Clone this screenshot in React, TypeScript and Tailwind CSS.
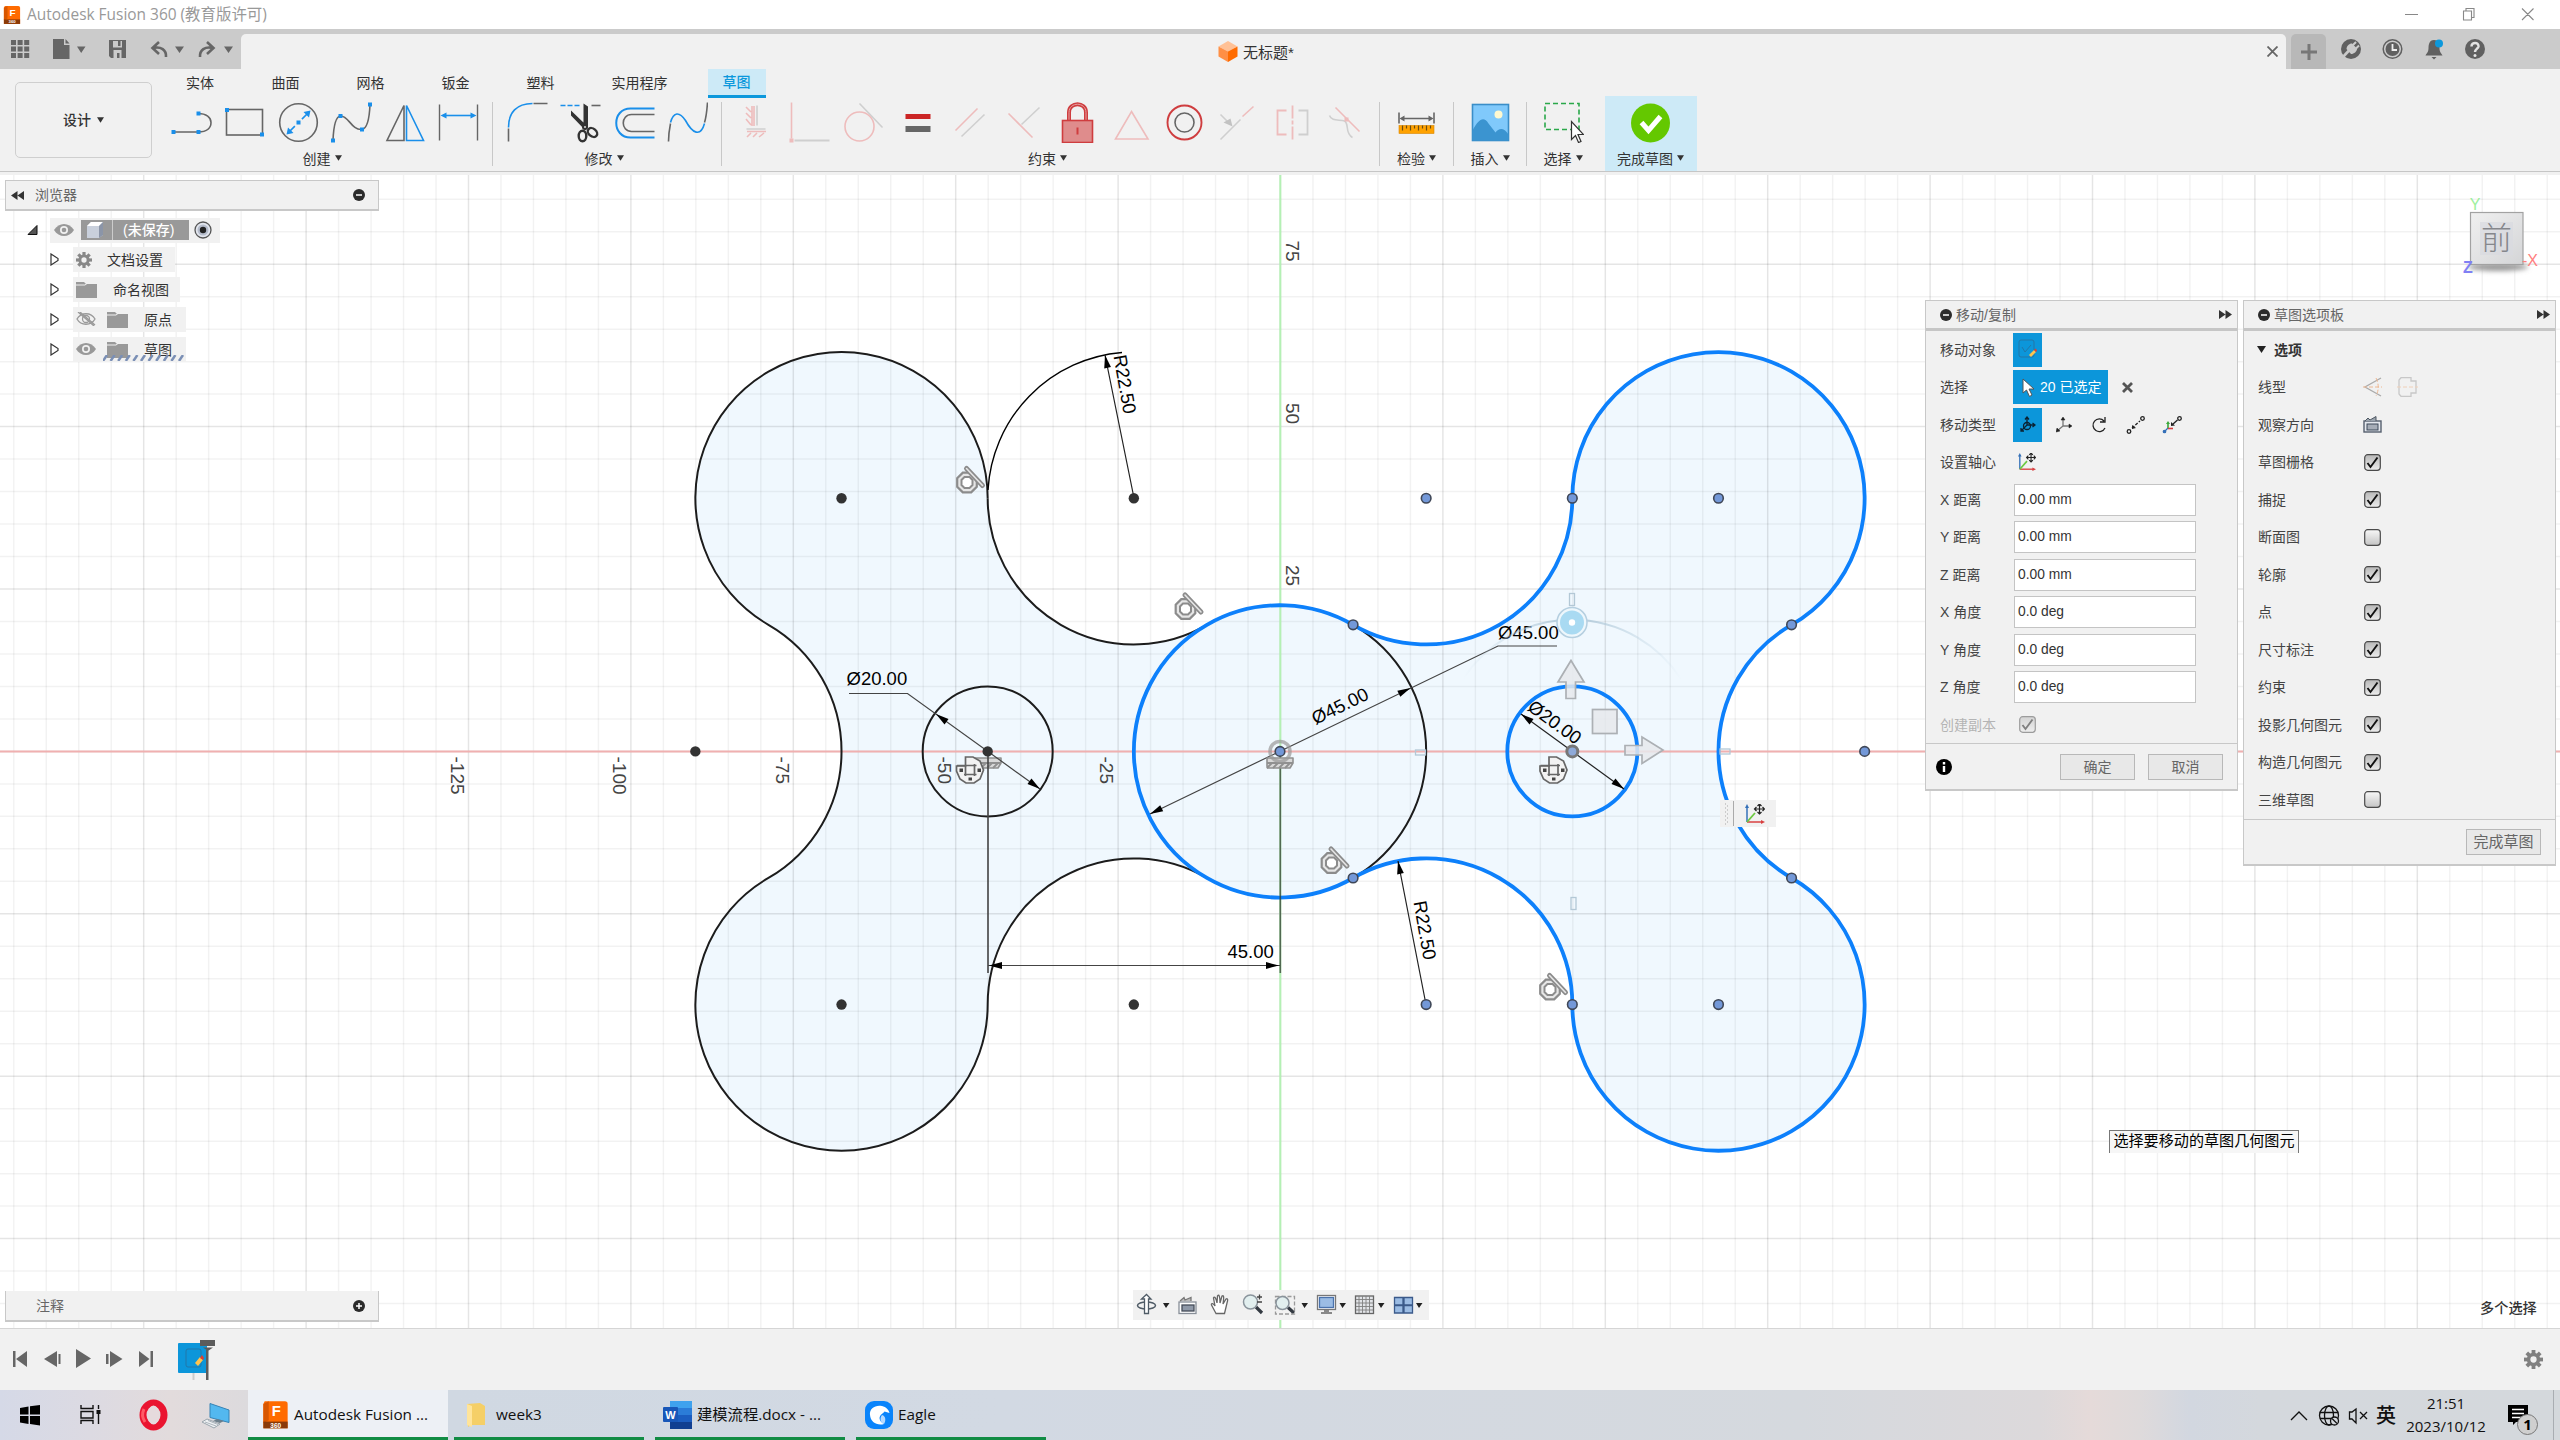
import React from "react";

const BLUE = "#1a8fea";
const GRAY = "#666";
const CX = 1280;
const CY = 751.4;
const U = 6.496;
const px = (u: number) => CX + u * U;
const py = (u: number) => CY - u * U;
const R = 22.5 * U;
const H = 38.971;
const Q = 19.486;

function Caret({ className = "" }: { className?: string }) {
  return (
    <svg className={className} width="7" height="6" viewBox="0 0 7 6">
      <path d="M0 0.3H7L3.5 5.8Z" fill="#333" />
    </svg>
  );
}

function Sq({ x, y }: { x: number; y: number }) {
  return <rect x={x - 2} y={y - 2} width="4" height="4" fill={BLUE} />;
}

function Slot({ children }: { children: React.ReactNode }) {
  return (
    <div className="flex w-[53.6px] shrink-0 justify-center">
      <svg width="41" height="41" viewBox="-0.5 -0.5 41 41" fill="none" strokeWidth="1.6">
        {children}
      </svg>
    </div>
  );
}

function Group({ label, width, labelPad = "", children }: { label: string; width: string; labelPad?: string; children: React.ReactNode }) {
  return (
    <div className={"flex shrink-0 flex-col items-center " + width}>
      <div className="flex h-[41px] justify-center">{children}</div>
      <div className={"mt-[5px] flex h-[22px] items-center gap-[4px] whitespace-nowrap text-[14px] text-[#333] " + labelPad}>
        {label}
        <Caret className="-mt-[2px]" />
      </div>
    </div>
  );
}

function Sep() {
  return <div className="h-[64px] w-[1px] shrink-0 bg-[#c8c8c8]" />;
}

function FusionLogo({ size }: { size: number }) {
  return (
    <svg width={size} height={size * 1.1} viewBox="0 0 20 22">
      <path d="M2 1H17a2 2 0 0 1 2 2V21H1V3Z" fill="#ff6b00" />
      <path d="M1 3L5 1V15L1 17Z" fill="#d85600" />
      <path d="M1 16H19V21H1Z" fill="#8a3a08" />
      <text x="10.6" y="12" fontSize="11" fontWeight="700" fill="#fff" textAnchor="middle" fontFamily="Liberation Sans, sans-serif">F</text>
      <text x="10.2" y="20.4" fontSize="4.8" fontWeight="700" fill="#fff" textAnchor="middle" fontFamily="Liberation Sans, sans-serif">360</text>
    </svg>
  );
}

function TitleBar() {
  return (
    <div className="flex h-[29px] shrink-0 items-center bg-white pl-[3px]">
      <FusionLogo size={18} />
      <span className="ml-[6px] font-['Open_Sans','Noto_Sans_CJK_SC',sans-serif] text-[15.45px] text-[#999]">Autodesk Fusion 360 (教育版许可)</span>
      <svg className="ml-auto mr-[25px] -mt-[1px]" width="134" height="14" viewBox="0 0 134 14" fill="none" stroke="#888" strokeWidth="1.1">
        <path d="M4 7.5H17M62.500 4H70.500V13H62.500ZM65 4V1.500H73V10.500H70.500M121 1.500L132.500 13M132.500 1.500L121 13" />
      </svg>
    </div>
  );
}

function TabBar() {
  return (
    <div className="flex h-[40px] shrink-0 bg-[#cbcbcb] pt-[5px]">
      <svg width="241" height="35" viewBox="0 34 241 35" fill="#666">
        {[0, 1, 2].map((r) => [0, 1, 2].map((c) => <rect key={`${r}${c}`} x={11 + c * 6.6} y={40 + r * 6.5} width="5" height="5" />))}
        <path d="M53 39H64V45H69.500V59H53ZM65.500 39L69.500 43.500H65.500Z" />
        <path d="M77 46.500H85.500L81.200 53ZM175 46.500H184L179.500 53ZM224 46.500H233L228.500 53Z" />
        <path d="M109 40H126V58H111L109 56ZM113 41V47.500H122V41ZM113.500 50V58H121.500V50Z" fillRule="evenodd" />
        <rect x="118" y="41" width="2.500" height="5" />
        <rect x="117" y="53" width="2.500" height="5" />
        <path d="M159 42L152.500 48L159 54M153 48C161 46 166.500 50 166 57" fill="none" stroke="#666" strokeWidth="2.600" />
        <path d="M207 42L213.500 48L207 54M213 48C205 46 199.500 50 200 57" fill="none" stroke="#666" strokeWidth="2.600" />
      </svg>
      <div className="flex h-[35px] w-[2045px] items-center rounded-t-[5px] bg-[#f1f1f1]">
        <div className="ml-[977px] flex items-center gap-[5px]">
          <svg width="20" height="21" viewBox="0 0 20 21">
            <path d="M10 0L19.500 5.500L10 10.500L0.500 5.500Z" fill="#ffc196" />
            <path d="M0.500 5.500L10 10.500V21L0.500 15.500Z" fill="#ff8f45" />
            <path d="M19.500 5.500L10 10.500V21L19.500 15.500Z" fill="#ff6b00" />
          </svg>
          <span className="pt-[2px] text-[15px] text-[#333]">无标题*</span>
        </div>
        <svg className="ml-auto mr-[8px]" width="11" height="11" viewBox="0 0 11 11" stroke="#666" strokeWidth="1.800">
          <path d="M0.500 0.500L10.500 10.500M10.500 0.500L0.500 10.500" />
        </svg>
      </div>
      <div className="ml-[5px] flex h-[35px] w-[35px] items-center justify-center rounded-t-[5px] bg-[#b8b8b8] pl-[1px]">
        <svg width="16" height="16" viewBox="0 0 16 16" stroke="#777" strokeWidth="3"><path d="M8 0V16M0 8H16" /></svg>
      </div>
      <svg className="ml-[12px]" width="152" height="30" viewBox="2338 34 152 30" fill="#606060">
        <circle cx="2351" cy="49" r="10" />
        <path d="M2342 58L2349 50.500" stroke="#cbcbcb" strokeWidth="2.600" />
        <path d="M2346.500 49C2346.500 46 2349 43.500 2352 43.500L2357 48.500C2357 51.500 2354 54 2351 54Z" fill="#cbcbcb" />
        <path d="M2352.500 45.500L2356 42M2355.500 49L2359 45.500" stroke="#cbcbcb" strokeWidth="2" />
        <circle cx="2392.500" cy="49" r="9.300" fill="none" stroke="#606060" strokeWidth="1.500" />
        <circle cx="2392.500" cy="49" r="7" />
        <path d="M2392.500 44V50H2397" fill="none" stroke="#eee" strokeWidth="1.800" />
        <path d="M2434 40C2429 40 2428.500 45 2428.500 48C2428.500 52 2427 53 2425.500 55.500H2442.500C2441 53 2439.500 52 2439.500 48C2439.500 45 2439 40 2434 40ZM2431.500 57H2436.500L2434 59.500Z" />
        <circle cx="2439" cy="43.500" r="4" fill="#0c98dc" />
        <circle cx="2475" cy="49" r="10" />
        <path d="M2471.500 46.500C2471.500 41.500 2479 42 2478.500 46.500C2478 49 2475 49 2475 52" fill="none" stroke="#e4e4e4" strokeWidth="2.500" />
        <circle cx="2475" cy="55.500" r="1.500" fill="#e4e4e4" />
      </svg>
    </div>
  );
}

const redL = "#eebcbc";
const grayL = "#cfcfcf";

function Toolbar() {
  return (
    <div className="flex h-[106px] shrink-0 border-b-[3px] border-[#f1f1f1] bg-[#f1f1f1]">
      <div className="flex h-[103px] w-full border-b border-[#c6c6c6]">
        <div className="ml-[15px] mt-[13px] flex h-[76px] w-[137px] shrink-0 items-center justify-center gap-[6px] rounded-[5px] border-[1.5px] border-[#cfcfcf] text-[14px] font-medium text-[#333]">
          设计
          <Caret />
        </div>
        <div className="flex flex-col">
          <div className="ml-[13px] flex h-[29px] items-center text-[14px] leading-none text-[#333]">
            <span className="-mt-[2px] w-[70px] text-center">实体</span>
            <span className="-mt-[2px] ml-[15.500px] w-[70px] text-center">曲面</span>
            <span className="-mt-[2px] ml-[15px] w-[70px] text-center">网格</span>
            <span className="-mt-[2px] ml-[15px] w-[70px] text-center">钣金</span>
            <span className="-mt-[2px] ml-[15px] w-[70px] text-center">塑料</span>
            <span className="-mt-[2px] ml-[15px] w-[98px] text-center">实用程序</span>
            <span className="ml-[19px] flex h-[29px] w-[58px] items-center justify-center border-b-[3px] border-[#0c98dc] bg-[#cdeaf7] font-medium text-[#0c98dc]">草图</span>
          </div>
          <div className="mt-[4px] flex">
            <Group label="创建" width="ml-[12px] w-[322px]" labelPad="pr-[6px]">
              <Slot>
                <path d="M1.500 29.500H26.500C36 29.500 39.500 25 39.500 20C39.500 15 35 11 26.500 11" stroke={GRAY} />
                <Sq x={2} y={29.5} /><Sq x={27} y={29.5} /><Sq x={27} y={11} />
              </Slot>
              <Slot>
                <rect x="2" y="7" width="36" height="25.500" stroke={GRAY} />
                <Sq x={2.5} y={7.5} /><Sq x={37.5} y={32} />
              </Slot>
              <Slot>
                <circle cx="20" cy="20" r="18.800" stroke={GRAY} />
                <path d="M10 30L30 10" stroke={BLUE} strokeDasharray="9 3.500 3 3.500 9" />
                <path d="M32 8L30.500 15L25 9.500ZM8 32L9.500 25L15 30.500Z" fill={BLUE} />
                <Sq x={20} y={20} />
              </Slot>
              <Slot>
                <path d="M1.500 38C2 25 4 14 9 13.500C17 13 20 28 30.500 27C36 26 38 14 38.500 2" stroke={GRAY} />
                <Sq x={1.5} y={38} /><Sq x={9} y={13.5} /><Sq x={30.5} y={27} /><Sq x={38.5} y={2} />
              </Slot>
              <Slot>
                <path d="M18.500 3V38H1.500Z" stroke={GRAY} />
                <path d="M21 3V38H38Z" stroke={BLUE} />
              </Slot>
              <Slot>
                <path d="M1 2V38M39 2V38" stroke={GRAY} strokeWidth="1.400" />
                <path d="M5 13H35" stroke={BLUE} />
                <path d="M2 13L8 10V16ZM38 13L32 10V16Z" fill={BLUE} />
              </Slot>
            </Group>
            <div className="w-[5.500px]" />
            <Sep />
            <Group label="修改" width="ml-[7px] w-[216px]" labelPad="pr-[7px]">
              <Slot>
                <path d="M1 39V26M26 1H40" stroke={GRAY} />
                <path d="M1 25C1 10 9 1 25 1" stroke={BLUE} />
              </Slot>
              <Slot>
                <path d="M0 3H20" stroke={BLUE} strokeDasharray="5 2" />
                <path d="M31 3H40" stroke={GRAY} />
                <path d="M23 1L27.500 4V26L23 22ZM10.500 8L25 22V28L10.500 13Z" fill="#333" />
                <circle cx="24.500" cy="24.500" r="3" fill="#333" />
                <circle cx="24.500" cy="24.500" r="1" fill="#ddd" />
                <ellipse cx="22" cy="33.500" rx="3.800" ry="5.200" stroke="#333" strokeWidth="2.400" />
                <ellipse cx="32" cy="30" rx="5.200" ry="3.800" stroke="#333" strokeWidth="2.400" transform="rotate(40 32 30)" />
              </Slot>
              <Slot>
                <path d="M40 6H16C-3 6-3 35 16 35H40" stroke={BLUE} strokeWidth="2" />
                <path d="M40 12H17C6 12 6 29 17 29H40" stroke={GRAY} />
              </Slot>
              <Slot>
                <path d="M1 39C1 32 2 26 3 21M37 20C39 14 39.500 7 40 0" stroke={GRAY} />
                <path d="M3 20C6 9 12 9 18 18C25 31 33 35 37 21" stroke={BLUE} />
              </Slot>
            </Group>
            <div className="w-[5px]" />
            <Sep />
            <Group label="约束" width="ml-[8px] w-[643px]" labelPad="pr-[7px]">
              <Slot>
                <path d="M17 3V23M15 3V23M9 4L14 9M9 10L14 15M9 16L14 22M10 28.500H29M10 34L14 30M16 34L20 30M22 34L27 30" stroke={redL} transform="translate(0.500 0.500)" />
                <path d="M20.500 3V23M10 26.500H29" stroke={grayL} />
              </Slot>
              <Slot>
                <path d="M2 0V36" stroke={redL} />
                <path d="M5 38H40" stroke={grayL} strokeWidth="2" />
                <rect x="0" y="36" width="4" height="4" fill={redL} />
              </Slot>
              <Slot>
                <path d="M16 1L39 25" stroke={grayL} />
                <circle cx="16" cy="24" r="14.500" stroke={redL} />
              </Slot>
              <Slot>
                <rect x="8" y="11.500" width="25" height="5" fill="#cb2525" />
                <rect x="8" y="23.500" width="25" height="6" fill="#666" />
              </Slot>
              <Slot>
                <path d="M5 28L27 6" stroke={redL} />
                <path d="M11 34L34 12" stroke={grayL} />
              </Slot>
              <Slot>
                <path d="M4 11L28 35" stroke={redL} />
                <path d="M17 22L35 5" stroke={grayL} />
              </Slot>
              <Slot>
                <path d="M11.500 18V10C11.500 -1 28.500 -1 28.500 10V18" stroke="#cf3d3f" strokeWidth="4" />
                <path d="M11.500 18V10C11.500 -1 28.500 -1 28.500 10V18" stroke="#e5a2a2" strokeWidth="1" />
                <rect x="5" y="18" width="30" height="22" fill="#df8c8c" stroke="#cf3d3f" />
                <path d="M20 25V32" stroke="#cf3d3f" strokeWidth="2" />
              </Slot>
              <Slot>
                <path d="M20 9L36.500 36.500H4Z" stroke={redL} />
              </Slot>
              <Slot>
                <circle cx="20" cy="20" r="17" stroke="#cf3d3f" strokeWidth="1.900" />
                <circle cx="20" cy="20" r="9.500" stroke="#666" />
              </Slot>
              <Slot>
                <path d="M2 37L22 17M2 12L12 22" stroke={grayL} />
                <path d="M24 14L35 4" stroke={redL} />
                <path d="M14 24L5 20L12 16Z" fill="#c2c2c2" />
              </Slot>
              <Slot>
                <path d="M14 8H5V32H14M20 3V16M20 18V22M20 24V37" stroke={redL} strokeWidth="1.800" />
                <path d="M26 8H35V32H26" stroke={grayL} strokeWidth="1.800" />
              </Slot>
              <Slot>
                <path d="M4 13C6 19 13 17 19 18.500C24 21 19 31 27 35" stroke={grayL} />
                <path d="M10 5L34 29" stroke={redL} />
                <rect x="19" y="15" width="4" height="4" fill={redL} />
              </Slot>
            </Group>
            <div className="w-[6.500px]" />
            <Sep />
            <Group label="检验" width="w-[73px]">
              <Slot>
                <path d="M2.500 10V21M37.500 10V21M6 16H34" stroke={GRAY} />
                <path d="M3 16L8 13V19ZM37 16L32 13V19Z" fill={GRAY} />
                <rect x="2.500" y="23" width="35" height="8" fill="#ffa200" stroke="#d88600" strokeWidth="0.600" />
                <path d="M6 23V28M10 23V26M14 23V28M18 23V26M22 23V28M26 23V26M30 23V28M34 23V26" stroke="#6b4c10" strokeWidth="1.200" />
              </Slot>
            </Group>
            <Sep />
            <Group label="插入" width="w-[72px]">
              <Slot>
                <rect x="2" y="2" width="36" height="36" fill="#80c9fb" stroke="#3a8ec8" />
                <path d="M2 28C8 17 13 13 18 21L25 30C28 26 33 24 38 32V38H2Z" fill="#3b94d0" />
                <circle cx="28" cy="12" r="4" fill="#fff9d0" />
              </Slot>
            </Group>
            <Sep />
            <Group label="选择" width="w-[72px]">
              <Slot>
                <rect x="1.500" y="1" width="34" height="26" stroke="#2aa84a" strokeDasharray="5 3" />
                <path d="M28 19V37L32 33L35 40L37.500 39L34.500 32H40Z" fill="#fff" stroke="#333" strokeWidth="1.200" />
              </Slot>
            </Group>
            <div className="-mt-[6px] ml-[6px] h-[75px] w-[92px] bg-[#cdeaf7] pt-[6px]">
              <Group label="完成草图" width="w-[91px]">
                <Slot>
                  <circle cx="20" cy="20.500" r="19.500" fill="#64c800" />
                  <path d="M11 20L18 28L30 14" stroke="#fff" strokeWidth="5" />
                </Slot>
              </Group>
            </div>
          </div>
        </div>
      </div>
    </div>
  );
}

function Tangent({ x, y }: { x: number; y: number }) {
  return (
    <g transform={`translate(${x} ${y})`} fill="none" strokeLinecap="round">
      <path d="M-4.200 -9.800H4.200L9.800 -4.200V4.200L4.200 9.800H-4.200L-9.800 4.200V-4.200Z" stroke="#8c8c8c" strokeWidth="2.200" fill="#e6e6e6" />
      <path d="M-2.500 -5.500H2.500L5.500 -2.500V2.500L2.500 5.500H-2.500L-5.500 2.500V-2.500Z" stroke="#8c8c8c" strokeWidth="2" fill="#fff" />
      <path d="M-0.500 -14L15.500 3" stroke="#8c8c8c" strokeWidth="5" />
      <path d="M-0.500 -14L15.500 3" stroke="#e6e6e6" strokeWidth="1.600" />
    </g>
  );
}

function FixMark({ x }: { x: number }) {
  return (
    <g transform={`translate(${x} 763)`} stroke="#909090" fill="#d8d8d8" strokeWidth="1.600">
      <path d="M-13 -5H13V0L10 5H-12.500L-13 3Z" strokeLinejoin="round" />
      <path d="M-13 0H13M-13 5L-8 0M-7 5L-2 0M-1 5L4 0M5 5L10 0" fill="none" strokeWidth="1.800" />
    </g>
  );
}

function CoincidentMark({ x }: { x: number }) {
  return (
    <g transform={`translate(${x} 770)`} stroke="#666" fill="#f2f2f2" strokeWidth="1.700">
      <path d="M-4.500 -13H3L10 -9L13.500 0L10 9L4 13H-4L-10 9L-13.500 1V-4H-4.500Z" />
      <path d="M-13 -4.500H6.500M-6 4.500H6.500M-4.500 -5V6M4.500 -6V6" fill="none" />
      <g fill="#444" stroke="none">
        <rect x="-10.500" y="-1.500" width="3.500" height="3.500" />
        <rect x="7.500" y="-1.500" width="3.500" height="3.500" />
        <rect x="-1.500" y="7.500" width="3.500" height="3" />
      </g>
    </g>
  );
}

function Tip({ x, y, a }: { x: number; y: number; a: number }) {
  return <path d="M0 0L-13 -3.400V3.400Z" fill="#000" transform={`translate(${x} ${y}) rotate(${a})`} />;
}

const BODY = [
  `M${px(-45)} ${py(H)}`,
  `A${R} ${R} 0 1 0 ${px(-78.75)} ${py(Q)}`,
  `A${R} ${R} 0 0 1 ${px(-78.75)} ${py(-Q)}`,
  `A${R} ${R} 0 1 0 ${px(-45)} ${py(-H)}`,
  `A${R} ${R} 0 0 1 ${px(-11.25)} ${py(-Q)}`,
].join("");
const LEFT_TOP = `M${px(-45)} ${py(H)}A${R} ${R} 0 0 0 ${px(-11.25)} ${py(Q)}`;
const RIGHT_FILL = [
  `M${px(45)} ${py(H)}`,
  `A${R} ${R} 0 1 1 ${px(78.75)} ${py(Q)}`,
  `A${R} ${R} 0 0 0 ${px(78.75)} ${py(-Q)}`,
  `A${R} ${R} 0 1 1 ${px(45)} ${py(-H)}`,
  `A${R} ${R} 0 0 0 ${px(11.25)} ${py(-Q)}`,
].join("");
const FILL = `${BODY}A${R} ${R} 0 0 0 ${px(11.25)} ${py(-Q)}A${R} ${R} 0 0 1 ${px(45)} ${py(-H)}A${R} ${R} 0 1 0 ${px(78.75)} ${py(-Q)}A${R} ${R} 0 0 1 ${px(78.75)} ${py(Q)}A${R} ${R} 0 1 0 ${px(45)} ${py(H)}A${R} ${R} 0 0 1 ${px(11.25)} ${py(Q)}A${R} ${R} 0 0 0 ${px(-11.25)} ${py(Q)}A${R} ${R} 0 0 1 ${px(-45)} ${py(H)}Z`;

const darkPoints = [[-67.5, H], [-22.5, H], [-90, 0], [-45, 0], [-67.5, -H], [-22.5, -H]];
const bluePoints = [[22.5, H], [45, H], [67.5, H], [11.25, Q], [78.75, Q], [11.25, -Q], [78.75, -Q], [90, 0], [22.5, -H], [45, -H], [67.5, -H]];
const range = (a: number, b: number) => Array.from({ length: b - a + 1 }, (_, i) => a + i);

function Sketch() {
  const gridColor = (k: number) => (k % 5 === 0 ? "rgba(0,0,0,0.1)" : "rgba(0,0,0,0.05)");
  return (
    <svg className="block" width="2560" height="1153" viewBox="0 175 2560 1153" fontFamily="Liberation Sans, Arial, sans-serif" fontSize="18.500">
      <rect x="0" y="175" width="2560" height="1153" fill="#fff" />
      <path d={FILL} fill="#f0f8fe" />
      {range(-39, 39).map((k) => (
        <line key={`v${k}`} x1={CX + 0.5 + k * 32.48} x2={CX + 0.5 + k * 32.48} y1="175" y2="1328" stroke={gridColor(k)} strokeWidth="1.500" />
      ))}
      {range(-17, 17).map((k) => (
        <line key={`h${k}`} y1={CY + k * 32.48} y2={CY + k * 32.48} x1="0" x2="2560" stroke={gridColor(k)} strokeWidth="1.500" />
      ))}
      <line x1="0" x2="2560" y1={CY} y2={CY} stroke="#f0b0b0" strokeWidth="2" />
      <line x1={CX + 0.3} x2={CX + 0.3} y1="175" y2="1328" stroke="#b4f0b4" strokeWidth="2" />
      <g fill="#444" fontSize="19">
        {([["25", 565], ["50", 403], ["75", 240.5]] as [string, number][]).map(([t, y]) => (
          <text key={t} transform={`translate(1286 ${y}) rotate(90)`}>{t}</text>
        ))}
        {([["-25", 1100], ["-50", 938], ["-75", 775.5], ["-100", 613], ["-125", 450.5]] as [string, number][]).map(([t, x]) => (
          <text key={t} transform={`translate(${x} 756.500) rotate(90)`}>{t}</text>
        ))}
      </g>
      <FixMark x={988} />
      <CoincidentMark x={970} />
      <Tangent x={967} y={482.5} />
      <Tangent x={1185.5} y={609} />
      <Tangent x={1331.5} y={863} />
      <Tangent x={1550} y={989.5} />
      <g fill="none" stroke="#1c1c1c" strokeWidth="2">
        <path d={BODY} />
        <path d={LEFT_TOP} />
        <circle cx={px(-45)} cy={CY} r="65" />
        <path d={`M${px(11.25)} ${py(Q)}A${R} ${R} 0 0 1 ${px(11.25)} ${py(-Q)}`} />
      </g>
      <g fill="none" stroke="#0d80fb" strokeWidth="3.800">
        <path d={RIGHT_FILL} />
        <path d={`M${px(45)} ${py(H)}A${R} ${R} 0 0 1 ${px(11.25)} ${py(Q)}`} />
        <path d={`M${px(11.25)} ${py(Q)}A${R} ${R} 0 1 0 ${px(11.25)} ${py(-Q)}`} />
        <circle cx={px(45)} cy={CY} r="65" />
      </g>
      <g fill="none" stroke="#222" strokeWidth="1.200">
        <path d="M988 490A146.200 146.200 0 0 1 1122 352.500" stroke="#000" strokeWidth="1.400" />
        <path d="M1134 498L1105 355M1426 1004.500L1398 861" />
        <path d="M849 693.500H907.500L1040 789" stroke="#444" />
        <path d="M1150 814L1498 646H1557" stroke="#444" />
        <path d="M1521 714L1624 789" />
        <path d="M988 965.500H1280" stroke="#444" />
        <path d="M988 752V973" stroke="#444" strokeWidth="1.600" />
        <path d="M1280.300 752V973" stroke="#303c30" strokeOpacity="0.750" strokeWidth="1.600" />
      </g>
      <Tip x={1105} y={355} a={-101.5} />
      <Tip x={1398} y={861} a={-101} />
      <Tip x={936} y={714} a={216} />
      <Tip x={1040} y={789} a={36} />
      <Tip x={1150} y={814} a={154} />
      <Tip x={1410.5} y={688} a={-26} />
      <Tip x={1521} y={714} a={216} />
      <Tip x={1624} y={789} a={36} />
      <Tip x={989} y={965.5} a={180} />
      <Tip x={1279} y={965.5} a={0} />
      <g fill="#000">
        <text x="846.500" y="685">Ø20.00</text>
        <text x="1498" y="639">Ø45.00</text>
        <text x="1227.500" y="958">45.00</text>
        <text transform="translate(1315.500 725) rotate(-26)">Ø45.00</text>
        <text transform="translate(1526.500 709.500) rotate(36)">Ø20.00</text>
        <text transform="translate(1113.500 356) rotate(80)">R22.50</text>
        <text transform="translate(1413.500 902) rotate(80)">R22.50</text>
      </g>
      <FixMark x={1280} />
      <circle cx="1280" cy="751.400" r="10" fill="none" stroke="#999" strokeOpacity="0.700" strokeWidth="3.500" />
      <CoincidentMark x={1553.5} />
      {darkPoints.map(([x, y]) => (
        <circle key={`${x},${y}`} cx={px(x)} cy={py(y)} r="5.200" fill="#333" />
      ))}
      {bluePoints.map(([x, y]) => (
        <circle key={`${x},${y}`} cx={px(x)} cy={py(y)} r="4.800" fill="#7398d8" stroke="#3f4757" strokeWidth="1.600" />
      ))}
      <circle cx="1280" cy={CY} r="4.800" fill="#7398d8" stroke="#3f4757" strokeWidth="1.600" />
      <circle cx={px(45)} cy={CY} r="5.500" fill="#8ea9d8" stroke="#777" strokeWidth="3" />
      <defs>
        <linearGradient id="arcFade" x1="1463" x2="1682" y1="0" y2="0" gradientUnits="userSpaceOnUse">
          <stop offset="0" stopColor="#b9d0df" stopOpacity="0" />
          <stop offset="0.500" stopColor="#b0c9d9" />
          <stop offset="1" stopColor="#b9d0df" stopOpacity="0" />
        </linearGradient>
        <linearGradient id="cubeFace" x1="0" x2="1" y1="0" y2="1">
          <stop offset="0" stopColor="#f0f0f0" />
          <stop offset="1" stopColor="#d4d5d7" />
        </linearGradient>
        <filter id="soft" x="-20%" y="-150%" width="140%" height="400%"><feGaussianBlur stdDeviation="2.500" /></filter>
      </defs>
      <path d="M1463 679A130 130 0 0 1 1681 679" fill="none" stroke="url(#arcFade)" strokeWidth="2" />
      <g fill="none" stroke="#b3c8d6" strokeWidth="1.300">
        <rect x="1569.500" y="593.500" width="5" height="12" />
        <rect x="1571" y="897.500" width="5" height="12" />
        <rect x="1415.500" y="750" width="10" height="5" />
        <rect x="1720" y="749" width="10" height="5" />
      </g>
      <circle cx="1572" cy="622.500" r="15" fill="#eef7fc" stroke="#b5cfe0" strokeWidth="1.500" />
      <circle cx="1572" cy="622.500" r="12" fill="#a9daf2" />
      <circle cx="1572" cy="622.500" r="3.200" fill="#fff" />
      <g fill="#e6e9ec" fillOpacity="0.850" stroke="#acb0b4" strokeWidth="1.700">
        <path d="M1571 660.500L1584 682H1575.500V698.500H1566V682H1558Z" />
        <path d="M1663 750L1642 763.500V755H1625V745.500H1642V737Z" />
        <rect x="1592.500" y="709.500" width="24.500" height="24" />
      </g>
      <ellipse cx="2498" cy="267" rx="30" ry="4" fill="#999" filter="url(#soft)" />
      <rect x="2470.500" y="212.500" width="52.500" height="52" fill="url(#cubeFace)" stroke="#a2a2a2" strokeWidth="1.200" />
      <rect x="2480" y="222" width="33" height="33" fill="#d8dadf" opacity="0.700" />
      <text x="2496.500" y="248.500" fontSize="31" fontWeight="300" fill="#85878c" textAnchor="middle" fontFamily="Noto Sans CJK SC, sans-serif">前</text>
      <text x="2475" y="210" fontSize="16" fill="#9df09d" textAnchor="middle">Y</text>
      <text x="2463" y="272.500" fontSize="16" fontWeight="700" fill="#8080f4">Z</text>
      <text x="2522" y="266" fontSize="16" fill="#ff8080">-X</text>
    </svg>
  );
}

function AxisMoveIcon({ size }: { size: number }) {
  return (
    <svg width={size} height={size} viewBox="0 0 20 20" fill="none">
      <path d="M2 18V3" stroke="#3470b8" strokeWidth="1.500" />
      <path d="M2 18H17" stroke="#d84040" strokeWidth="1.500" />
      <path d="M2 18L10 9" stroke="#6cc840" strokeWidth="1.800" />
      <path d="M0 4L2 0L4 4Z" fill="#3470b8" />
      <path d="M16 16L20 18L16 20Z" fill="#d84040" />
      <path d="M9.500 5H19.500M14.500 0V10M12.500 2L14.500 0L16.500 2M12.500 8L14.500 10L16.500 8M11.500 3L9.500 5L11.500 7M17.500 3L19.500 5L17.500 7" stroke="#222" strokeWidth="1.200" />
    </svg>
  );
}

function SketchEditIcon() {
  return (
    <svg width="19" height="21" viewBox="0 0 19 21" fill="none">
      <rect x="1" y="1" width="15" height="17" rx="2" stroke="#2277a8" />
      <path d="M4 8L7 13L13 6" stroke="#2277a8" />
      <path d="M11 16L16 11L18 13L13 18Z" fill="#ffc34d" />
      <path d="M16 11L18 9.500L19 12L18 13Z" fill="#e23d2d" />
    </svg>
  );
}

function Eye({ off = false }: { off?: boolean }) {
  return (
    <svg width="20" height="14" viewBox="0 0 20 14">
      {off ? (
        <g fill="none" stroke="#999" strokeWidth="1.300">
          <path d="M1 7C5 0 15 0 19 7C15 14 5 14 1 7ZM2 0L18 14M4 0L19 13" />
          <circle cx="10" cy="7" r="3.500" />
        </g>
      ) : (
        <g>
          <path d="M0 7C5 -1 15 -1 20 7C15 15 5 15 0 7Z" fill="#999" />
          <circle cx="10" cy="7" r="4" fill="#f1f1f1" />
          <circle cx="10" cy="7" r="2.300" fill="#999" />
        </g>
      )}
    </svg>
  );
}

function Folder() {
  return (
    <svg width="21" height="16" viewBox="0 0 21 16" fill="#999">
      <path d="M0 0H8L10 2H21V16H0Z" />
      <path d="M0 3H9L11 1.500" stroke="#f1f1f1" strokeWidth="1" fill="none" />
    </svg>
  );
}

function Gear({ size, color = "#808080" }: { size: number; color?: string }) {
  return (
    <svg width={size} height={size} viewBox="0 0 20 20">
      <g fill={color}>
        {[0, 45, 90, 135].map((a) => (
          <rect key={a} x="8" y="0" width="4" height="20" transform={`rotate(${a} 10 10)`} />
        ))}
        <circle cx="10" cy="10" r="7" />
      </g>
      <circle cx="10" cy="10" r="3.300" fill="#f1f1f1" />
    </svg>
  );
}

function Dot({ plus = false }: { plus?: boolean }) {
  return (
    <svg width="12" height="12" viewBox="0 0 12 12">
      <circle cx="6" cy="6" r="6" fill="#2b2b2b" />
      <path d={plus ? "M3 6H9M6 3V9" : "M3 6H9"} stroke="#fff" strokeWidth="1.500" />
    </svg>
  );
}

function Expand() {
  return (
    <svg className="shrink-0" width="9" height="13" viewBox="0 0 9 13">
      <path d="M1 1V12L8 7.500V5.500Z" fill="#fff" stroke="#333" strokeWidth="1.200" />
    </svg>
  );
}

function Browser() {
  return (
    <div className="absolute left-[5px] top-[5px] w-[374px] text-[14px] text-[#333]">
      <div className="flex h-[31px] items-center border border-b-2 border-[#c8c8c8] bg-[#f1f1f1] pl-[5px] pr-[13px]">
        <svg width="13" height="9" viewBox="0 0 13 9" fill="#333"><path d="M6.500 0V9L0 4.500ZM13 0V9L6.500 4.500Z" /></svg>
        <span className="ml-[11px] text-[#666]">浏览器</span>
        <span className="ml-auto"><Dot /></span>
      </div>
      <div className="mt-[6px] flex h-[26px] items-center pl-[22px]">
        <svg width="11" height="10" viewBox="0 0 11 10"><path d="M10 0.500V9.500H1Z" fill="#555" stroke="#111" /></svg>
        <div className="ml-[12px] flex h-[25px] items-center bg-[#f1f1f1] pl-[4px] pr-[8px]">
          <Eye />
          <div className="ml-[7px] flex h-[20px] w-[108px] items-center bg-[#999]">
            <svg className="ml-[5px]" width="18" height="18" viewBox="0 0 18 18">
              <path d="M1 5L5 1H17V14L13 17H1Z" fill="#c9d0dc" />
              <path d="M1 5L5 1H17L13 5Z" fill="#fff" />
              <path d="M13 5L17 1V14L13 17Z" fill="#8b95a8" />
            </svg>
            <div className="ml-[8px] h-[20px] w-[1px] bg-[#ccc]" />
            <span className="ml-[10px] font-medium text-white">(未保存)</span>
          </div>
          <svg className="ml-[5px]" width="18" height="18" viewBox="0 0 18 18">
            <circle cx="9" cy="9" r="8" fill="#e2e6ee" stroke="#555" strokeWidth="1.300" />
            <circle cx="9" cy="9" r="5.500" fill="#b5bccb" />
            <circle cx="9" cy="9" r="3.200" fill="#222" />
          </svg>
        </div>
      </div>
      <div className="-mt-[1px] flex flex-col">
        {[
          { t: "文档设置", w: "w-[102px]", i: <span className="ml-[3px] flex"><Gear size={16} color="#888" /></span>, m: "ml-[15px]" },
          { t: "命名视图", w: "w-[107px]", i: <span className="ml-[3px] flex"><Folder /></span>, m: "ml-[16px]" },
          { t: "原点", w: "w-[113px]", i: <span className="ml-[3px] flex gap-[11px]"><Eye off /><Folder /></span>, m: "ml-[16px]" },
          { t: "草图", w: "w-[113px]", i: <span className="ml-[3px] flex gap-[11px]"><Eye /><Folder /></span>, m: "ml-[16px]" },
        ].map((r, i) => (
          <div key={r.t} className="mt-[5px] flex h-[25px] items-center pl-[45px]">
            <Expand />
            <div className={"relative ml-[14px] flex h-[25px] items-center bg-[#f1f1f1] " + r.w}>
              {r.i}
              <span className={r.m}>{r.t}</span>
              {i === 3 && (
                <svg className="absolute left-[30px] top-[18px]" width="82" height="6" viewBox="0 0 82 6" stroke="#7a8fb5" strokeWidth="2.500">
                  {range(0, 10).map((k) => <line key={k} x1={k * 7.6} y1="6" x2={k * 7.6 + 4} y2="0" />)}
                </svg>
              )}
            </div>
          </div>
        ))}
      </div>
    </div>
  );
}

function PanelHeader({ title }: { title: string }) {
  return (
    <div className="flex h-[30px] items-center border-b-[3px] border-[#c6c6c6] pl-[14px] pr-[5px] text-[14px] text-[#666]">
      <Dot />
      <span className="ml-[4px]">{title}</span>
      <svg className="ml-auto" width="13" height="9" viewBox="0 0 13 9" fill="#333"><path d="M0 0V9L6.500 4.500ZM6.500 0V9L13 4.500Z" /></svg>
    </div>
  );
}

function MovePanel() {
  const fields = [["X 距离", "0.00 mm"], ["Y 距离", "0.00 mm"], ["Z 距离", "0.00 mm"], ["X 角度", "0.0 deg"], ["Y 角度", "0.0 deg"], ["Z 角度", "0.0 deg"]];
  return (
    <div className="absolute left-[1925px] top-[125px] flex h-[491px] w-[313px] flex-col border border-b-2 border-[#c8c8c8] bg-[#f1f1f1] text-[14px] text-[#444]">
      <PanelHeader title="移动/复制" />
      <div className="flex h-[37.500px] items-center pl-[14px]">
        <span className="w-[73px]">移动对象</span>
        <span className="flex h-[34px] w-[29px] items-center justify-center bg-[#0c96da]"><SketchEditIcon /></span>
      </div>
      <div className="flex h-[37.500px] items-center pl-[14px]">
        <span className="w-[73px]">选择</span>
        <span className="flex h-[34px] w-[95px] items-center gap-[5px] whitespace-nowrap bg-[#0c96da] pl-[9px] text-white">
          <svg width="13" height="19" viewBox="0 0 13 19"><path d="M1 1V15L4.500 12L7.500 18.500L10 17L7 11H12Z" fill="#fff" stroke="#555" /></svg>
          20 已选定
        </span>
        <svg className="ml-[14px]" width="11" height="11" viewBox="0 0 11 11" stroke="#555" strokeWidth="2.800"><path d="M1 1L10 10M10 1L1 10" /></svg>
      </div>
      <div className="flex h-[37.500px] items-center pl-[14px]">
        <span className="w-[73px]">移动类型</span>
        <span className="flex h-[34px] w-[29px] items-center justify-center bg-[#0c96da]">
          <svg width="16" height="17" viewBox="0 0 16 17" fill="none" stroke="#0b2233" strokeWidth="1.300">
            <path d="M7 9V1M7 9H15M7 9L1 15M5 3.500L7 1L9 3.500M12.500 7L15 9L12.500 11M1 12V15H4" /><circle cx="7" cy="10" r="3.500" />
          </svg>
        </span>
        <svg className="ml-[14px]" width="126" height="18" viewBox="0 0 126 18" fill="none" stroke="#222" strokeWidth="1.300">
          <path d="M7 10V2M7 10H15M7 10L1 15" stroke="#777" />
          <path d="M5 4L7 1L9 4ZM13 8L16 10L13 12ZM0 16L1 12L4 15Z" fill="#222" strokeWidth="0.500" />
          <path d="M48 5A6.300 6.300 0 1 0 49 12M49 1V6H44" />
          <circle cx="73" cy="15.500" r="1.800" /><circle cx="86.500" cy="2.500" r="1.800" /><path d="M76 12L84 5" strokeDasharray="3 1.500" /><path d="M76 13V9L80 12Z" fill="#222" stroke="none" />
          <path d="M109 15L112 12" stroke="#3470b8" /><path d="M112 12V7" stroke="#3aa83a" strokeWidth="1.600" /><path d="M112 12.500H117" stroke="#d84040" strokeWidth="1.600" />
          <circle cx="123.500" cy="2.500" r="1.800" /><path d="M117 8L121.500 4" />
          <circle cx="108.500" cy="15.500" r="1.200" fill="#3470b8" stroke="#3470b8" />
          <path d="M115 10V6L119 9.500Z" fill="#222" stroke="none" />
          <path d="M110 8L112 5L114 8Z" fill="#3aa83a" stroke="none" />
        </svg>
      </div>
      <div className="flex h-[37.500px] items-center pl-[14px]">
        <span className="w-[78px]">设置轴心</span>
        <AxisMoveIcon size={18} />
      </div>
      {fields.map(([a, b]) => (
        <div key={a} className="flex h-[37.500px] items-center pl-[14px]">
          <span className="w-[74px]">{a}</span>
          <span className="flex h-[32px] w-[182px] items-center border border-[#c4c4c4] bg-white pl-[3px] font-['Liberation_Sans',sans-serif] text-[13.800px] text-[#333]">{b}</span>
        </div>
      ))}
      <div className="flex h-[37px] items-center pl-[14px]">
        <span className="w-[79px] text-[#b4b4b4]">创建副本</span>
        <span className="opacity-50"><Check on /></span>
      </div>
      <div className="flex grow items-center border-t border-[#c8c8c8] pl-[10px] pr-[14px]">
        <svg width="16" height="16" viewBox="0 0 16 16"><circle cx="8" cy="8" r="8" fill="#000" /><path d="M8 7V13M8 3V5.500" stroke="#fff" strokeWidth="2.400" /></svg>
        <span className="ml-auto flex h-[26px] w-[75px] items-center justify-center border border-[#b8b8b8] bg-[#e8e8e8] text-[#666]">确定</span>
        <span className="ml-[13px] flex h-[26px] w-[75px] items-center justify-center border border-[#b8b8b8] bg-[#e8e8e8] text-[#666]">取消</span>
      </div>
    </div>
  );
}

function Check({ on = false }: { on?: boolean }) {
  return (
    <svg width="17" height="17" viewBox="0 0 17 17">
      <defs>
        <linearGradient id="cb" x1="0" x2="0" y1="0" y2="1"><stop offset="0" stopColor="#b8b8b8" /><stop offset="1" stopColor="#ececec" /></linearGradient>
        <linearGradient id="cbOff" x1="0" x2="0" y1="0" y2="1"><stop offset="0" stopColor="#f8f8f8" /><stop offset="1" stopColor="#c4c4c4" /></linearGradient>
      </defs>
      <rect x="0.700" y="0.700" width="15.600" height="15.600" rx="3" fill={on ? "url(#cb)" : "url(#cbOff)"} stroke="#4a4a4a" strokeWidth="1.200" />
      {on && <path d="M3.500 9L6.500 13L13.500 3.500" fill="none" stroke="#111" strokeWidth="1.900" />}
    </svg>
  );
}

function LookIcon() {
  return (
    <svg width="19" height="17" viewBox="0 0 19 17">
      <rect x="1" y="5" width="17" height="11" fill="#e4e8ee" stroke="#56606e" strokeWidth="1.400" />
      <rect x="4" y="8" width="11" height="6" fill="#a6adb7" stroke="#3d4858" />
      <path d="M2 5L5 2L7 4L13 0.500V5" fill="#9aa3ad" stroke="#4f5863" />
    </svg>
  );
}

function OptionsPanel() {
  const rows: [string, boolean][] = [["草图栅格", true], ["捕捉", true], ["断面图", false], ["轮廓", true], ["点", true], ["尺寸标注", true], ["约束", true], ["投影几何图元", true], ["构造几何图元", true], ["三维草图", false]];
  return (
    <div className="absolute left-[2243px] top-[125px] flex h-[566px] w-[313px] flex-col border border-b-2 border-[#c8c8c8] bg-[#f1f1f1] text-[14px] text-[#444]">
      <PanelHeader title="草图选项板" />
      <div className="flex h-[37.500px] items-center pl-[13px] font-bold text-[#333]">
        <svg className="mr-[8px]" width="9" height="7" viewBox="0 0 9 7"><path d="M0 0H9L4.500 7Z" fill="#222" /></svg>
        选项
      </div>
      <div className="flex h-[37.500px] items-center pl-[14px]">
        <span className="w-[105px]">线型</span>
        <svg width="55" height="20" viewBox="0 0 55 20" fill="none">
          <path d="M18 1L2 10L18 19" stroke="#aaa" strokeWidth="1.300" />
          <path d="M0 10H19M13 1C16 7 16 13 13 19" stroke="#eeb892" strokeDasharray="4 2" />
          <path d="M38 0.700H48V4H53V16H48V19.300H38L36 17V3Z" stroke="#c8c8c8" strokeWidth="1.300" />
          <path d="M34 10H55" stroke="#f0d0b8" strokeDasharray="4 2" />
        </svg>
      </div>
      <div className="flex h-[37.500px] items-center pl-[14px]">
        <span className="w-[105px]">观察方向</span>
        <LookIcon />
      </div>
      {rows.map(([t, on]) => (
        <div key={t} className="flex h-[37.500px] items-center pl-[14px]">
          <span className="w-[106px]">{t}</span>
          <Check on={on} />
        </div>
      ))}
      <div className="flex grow items-center justify-end border-t border-[#c8c8c8] pr-[14px]">
        <span className="flex h-[26px] w-[75px] items-center justify-center border border-[#b8b8b8] bg-[#e8e8e8] text-[15px] text-[#666]">完成草图</span>
      </div>
    </div>
  );
}

function NavBar() {
  return (
    <div className="absolute left-[1133px] top-[1115px] h-[30px] w-[296px] bg-[#f1f1f1]">
      <svg width="296" height="30" viewBox="1133 1290 296 30" fill="none" strokeWidth="1.300">
        <path d="M1163 1303H1169.500L1166 1308ZM1301.500 1303H1308L1304.500 1308ZM1339.500 1303H1346L1342.500 1308ZM1378 1303H1384.500L1381 1308ZM1416 1303H1422.500L1419 1308Z" fill="#222" />
        <ellipse cx="1146.500" cy="1305.500" rx="9" ry="3.500" stroke="#4f5b66" strokeWidth="1.500" />
        <path d="M1144.500 1313.500V1299H1141.500L1146.500 1294.500L1151 1299H1148.500V1313.500Z" fill="#fff" stroke="#4f5b66" />
        <g transform="translate(1178 1297)"><rect x="1" y="5" width="17" height="11.500" fill="#fff" stroke="#888f98" /><rect x="4" y="8" width="12" height="6" fill="#8f99a8" stroke="#444c58" /><path d="M2 4L6 0.500L7 3L13 0.500V4" fill="#bbb" stroke="#777" /></g>
        <path d="M1216 1313.500L1211.500 1305C1211 1303 1213 1303 1215 1306L1213.500 1298C1214 1296 1216 1297 1217 1303L1217.500 1296C1219 1294 1220 1296 1220 1303L1222 1296C1224 1295 1224 1297 1223 1304L1226 1299C1228 1298 1228 1300 1227 1303L1224.500 1313.500Z" fill="#fff" stroke="#666" />
        <path d="M1256 1307L1262 1313M1288 1307.500L1294 1313" stroke="#333a42" strokeWidth="3.200" />
        <circle cx="1250.500" cy="1302" r="7" fill="#e2efef" stroke="#8a949c" strokeWidth="1.500" />
        <path d="M1257 1297H1262M1259.500 1294.500V1299.500M1257 1302H1262" stroke="#444" />
        <rect x="1275.500" y="1296.500" width="19" height="17.500" stroke="#999" strokeDasharray="4 2" />
        <circle cx="1282.500" cy="1303" r="6.500" fill="#e2efef" stroke="#8a949c" strokeWidth="1.500" />
        <rect x="1317.500" y="1295.500" width="18" height="14" fill="#fff" stroke="#777" />
        <rect x="1319.500" y="1297.500" width="14" height="10" fill="#9bbce4" stroke="#4b73ad" />
        <path d="M1324 1310H1329V1312H1332V1314H1321V1312H1324Z" fill="#888" />
        <rect x="1355.500" y="1296" width="18" height="17.500" fill="#e2e4e8" stroke="#666" />
        <path d="M1359 1296V1313M1362.500 1296V1313M1366 1296V1313M1369.500 1296V1313M1356 1299.500H1373M1356 1303H1373M1356 1306.500H1373M1356 1310H1373" stroke="#808080" strokeWidth="0.900" />
        <path d="M1394.500 1297.500H1403V1305H1394.500ZM1404 1297.500H1412.500V1305H1404ZM1394.500 1305.500H1403V1313H1394.500ZM1404 1305.500H1412.500V1313H1404Z" fill="#9bbce4" stroke="#3b5a8a" />
      </svg>
    </div>
  );
}

function Canvas() {
  return (
    <div className="relative h-[1153px] shrink-0">
      <Sketch />
      <Browser />
      <div className="absolute left-[1720px] top-[625px] flex h-[27px] w-[56px] items-center bg-[#f1f1f1]">
        <svg width="15" height="27" viewBox="0 0 15 27"><path d="M5.500 3V25M7.500 5V25" stroke="#ccc" strokeDasharray="2 2" /><path d="M13.500 1V26" stroke="#aaa" /></svg>
        <span className="ml-[10px]"><AxisMoveIcon size={20} /></span>
      </div>
      <MovePanel />
      <OptionsPanel />
      <div className="absolute left-[2109px] top-[955px] flex h-[23px] w-[190px] items-center justify-center whitespace-nowrap border border-b-0 border-[#777] bg-[#f6f6f6] pb-[2px] text-[15.100px] text-black">选择要移动的草图几何图元</div>
      <div className="absolute left-[2480px] top-[1126px] whitespace-nowrap text-[14.200px] font-medium text-[#333]">多个选择</div>
      <div className="absolute left-[5px] top-[1116px] flex h-[31px] w-[374px] items-center border border-b-2 border-t-0 border-[#c8c8c8] bg-[#f1f1f1] pl-[30px] pr-[13px] text-[14px] text-[#666]">
        注释
        <span className="ml-auto"><Dot plus /></span>
      </div>
      <NavBar />
    </div>
  );
}

function Timeline() {
  return (
    <div className="flex h-[62px] shrink-0 items-center border-t border-[#d5d5d5] bg-[#f1f1f1] pb-[1px] pr-[17px]">
      <svg width="230" height="60" viewBox="0 1329 230 60" fill="#666">
        <path d="M13 1351H15.500V1367H13ZM27 1351V1367L16 1359ZM57 1351V1367L44 1359ZM58.500 1354H60.500V1364H58.500ZM76 1349V1368L91 1358.500ZM106 1354H108.500V1364H106ZM110 1351V1367L122.500 1359ZM139 1351V1367L149.500 1359ZM150.500 1351H153V1367H150.500Z" />
        <rect x="178" y="1343" width="29" height="30" rx="1" fill="#0c96da" />
        <rect x="186" y="1349" width="15" height="18" rx="2" fill="none" stroke="#2277a8" />
        <path d="M195 1363L200 1357L203 1360L198 1366Z" fill="#ffc34d" />
        <path d="M200 1358L202 1355L204 1358L203 1360Z" fill="#e23d2d" />
        <path d="M200 1340H215V1346H200ZM203 1347.500H213L208 1351ZM206 1350H208.500V1380H206Z" fill="#5c5c5c" />
        <path d="M193.500 1373V1380" stroke="#ccc" strokeWidth="2" />
      </svg>
      <span className="ml-auto"><Gear size={19} /></span>
    </div>
  );
}

function TaskItem({ icon, label, active = false, className }: { icon: React.ReactNode; label: string; active?: boolean; className: string }) {
  return (
    <div className={"flex h-[50px] shrink-0 items-center whitespace-nowrap border-b-[3px] border-[#118c44] pt-[2px] " + (active ? "bg-[#edf0f5] " : "") + className}>
      {icon}
      <span>{label}</span>
    </div>
  );
}

function Taskbar() {
  return (
    <div className="flex h-[50px] shrink-0 bg-[linear-gradient(90deg,#d5d9e7_0px,#dcdae2_90px,#e2dbdc_170px,#dcdadd_248px,#d0d8e2_450px,#d2d9e3_1000px,#d5d9de_1800px,#dcd9db_2040px,#e5dad9_2090px,#dedadb_2140px,#d2d7e0_2190px,#d4d8dd_2260px,#d4d8dc_2560px)] font-['Open_Sans','Noto_Sans_CJK_SC',sans-serif] text-[15.300px] text-[#111]">
      <svg className="shrink-0" width="248" height="50" viewBox="0 1390 248 50">
        <path d="M20 1408L28.500 1406.500V1414.500H20ZM30 1406.300L40 1405V1414.500H30ZM20 1416H28.500V1424L20 1422.500ZM30 1416H40V1425.500L30 1424Z" fill="#000" />
        <path d="M81 1405V1408.500H93V1405M81 1424V1420.500H93V1424M81 1411.500H93V1418H81ZM98.500 1405V1409M98.500 1413V1424" stroke="#111" strokeWidth="1.400" fill="none" />
        <rect x="96.500" y="1410" width="4" height="4" fill="#111" />
        <ellipse cx="153.500" cy="1415" rx="10.500" ry="12" fill="none" stroke="#ea1430" strokeWidth="7" />
        <path d="M144 1409A13 13 0 0 0 145 1422" stroke="#ff5b66" strokeWidth="3" fill="none" />
        <ellipse cx="153.500" cy="1415" rx="6" ry="9.500" fill="#e6dadd" />
        <path d="M210 1403.500L229 1410V1422.500L210 1417.500Z" fill="#53b8ef" stroke="#3683b5" />
        <path d="M217 1419L224 1421L220 1423L213 1421Z" fill="#6c7f8c" />
        <path d="M202 1422L207 1419L220 1424L214 1428Z" fill="#eef1f3" stroke="#9aa5ad" />
        <path d="M205 1422L216 1426M208 1420.500L218 1424.500" stroke="#9aa5ad" strokeWidth="0.800" />
      </svg>
      <TaskItem active className="w-[200px] gap-[5px] pl-[14px]" icon={<FusionLogo size={27} />} label="Autodesk Fusion ..." />
      <TaskItem className="ml-[6px] w-[190px] gap-[10px] pl-[12px]" icon={<svg width="20" height="26" viewBox="0 0 20 26"><path d="M1 2L14 1L19 4V23H5L2 25Z" fill="#f5cf67" /><path d="M1 2L6 4V25L1 23Z" fill="#ffe49a" /></svg>} label="week3" />
      <TaskItem
        className="ml-[11px] w-[190px] gap-[5px] pl-[8px]"
        icon={
          <svg width="29" height="28" viewBox="0 0 29 28">
            <rect x="7" y="0" width="22" height="7" fill="#3fa2ee" /><rect x="7" y="7" width="22" height="7" fill="#2b7cd8" /><rect x="7" y="14" width="22" height="7" fill="#1b5dc0" /><rect x="7" y="21" width="22" height="7" fill="#103f91" />
            <rect x="0" y="6" width="15" height="15" rx="1" fill="#1857b8" />
            <text x="7.500" y="17.500" fontSize="11" fontWeight="700" fill="#fff" textAnchor="middle" fontFamily="Liberation Sans, sans-serif">W</text>
          </svg>
        }
        label="建模流程.docx - ..."
      />
      <TaskItem
        className="ml-[11px] w-[190px] gap-[5px] pl-[9px]"
        icon={
          <svg width="28" height="28" viewBox="0 0 28 28">
            <rect width="28" height="28" rx="9" fill="#0a84fb" />
            <path d="M5 14C4 7 11 3.500 17 5C21 6 24 9 24.500 12L19.500 10.500C18 13 15 13 14.500 17C14.500 20 17 22 19 23C12 25 5.500 21 5 14Z" fill="#fff" />
            <path d="M17 14C21 15 21 20 19 23C16 22 14 18 17 14Z" fill="#b5d9ff" />
          </svg>
        }
        label="Eagle"
      />
      <div className="ml-auto flex items-center">
        <svg width="82" height="24" viewBox="2288 1402 82 24" fill="none" stroke="#111" strokeWidth="1.300">
          <path d="M2290 1419L2298 1411L2306 1419" />
          <circle cx="2328" cy="1414.500" r="9.500" /><ellipse cx="2328" cy="1414.500" rx="4.500" ry="9.500" /><path d="M2319 1411.500H2337M2319 1417.500H2337" />
          <circle cx="2333.500" cy="1420" r="4" fill="#d4d8dd" /><path d="M2331 1417.500L2336 1422.500" />
          <path d="M2348.500 1411H2351L2355 1408V1422L2351 1418H2348.500ZM2359 1411L2366 1418M2366 1411L2359 1418" />
        </svg>
        <span className="ml-[5px] font-['Noto_Sans_CJK_SC',sans-serif] text-[20px] font-medium leading-none">英</span>
        <div className="ml-[8px] flex w-[84px] flex-col items-center text-[15px] leading-[23px]">
          <span>21:51</span>
          <span>2023/10/12</span>
        </div>
        <svg className="ml-[18px]" width="48" height="50" viewBox="2507 1390 48 50">
          <path d="M2509 1405H2529V1422H2517L2514 1425V1422H2509Z" fill="#000" />
          <path d="M2513 1409.500H2525M2513 1413.500H2525M2513 1417.500H2525" stroke="#fff" strokeWidth="1.300" />
          <circle cx="2528.500" cy="1424.500" r="10" fill="#cfcfcf" stroke="#777" />
          <text x="2528.500" y="1430" fontSize="15" fontWeight="700" textAnchor="middle" fill="#000">1</text>
          <path d="M2554.500 1390V1440" stroke="#a9adb2" />
        </svg>
        <div className="w-[6px]" />
      </div>
    </div>
  );
}

export default function App() {
  return (
    <div className="flex h-[1440px] w-[2560px] flex-col overflow-hidden bg-[#f1f1f1] font-['Liberation_Sans','Noto_Sans_CJK_SC',sans-serif] leading-none">
      <TitleBar />
      <TabBar />
      <Toolbar />
      <Canvas />
      <Timeline />
      <Taskbar />
    </div>
  );
}
